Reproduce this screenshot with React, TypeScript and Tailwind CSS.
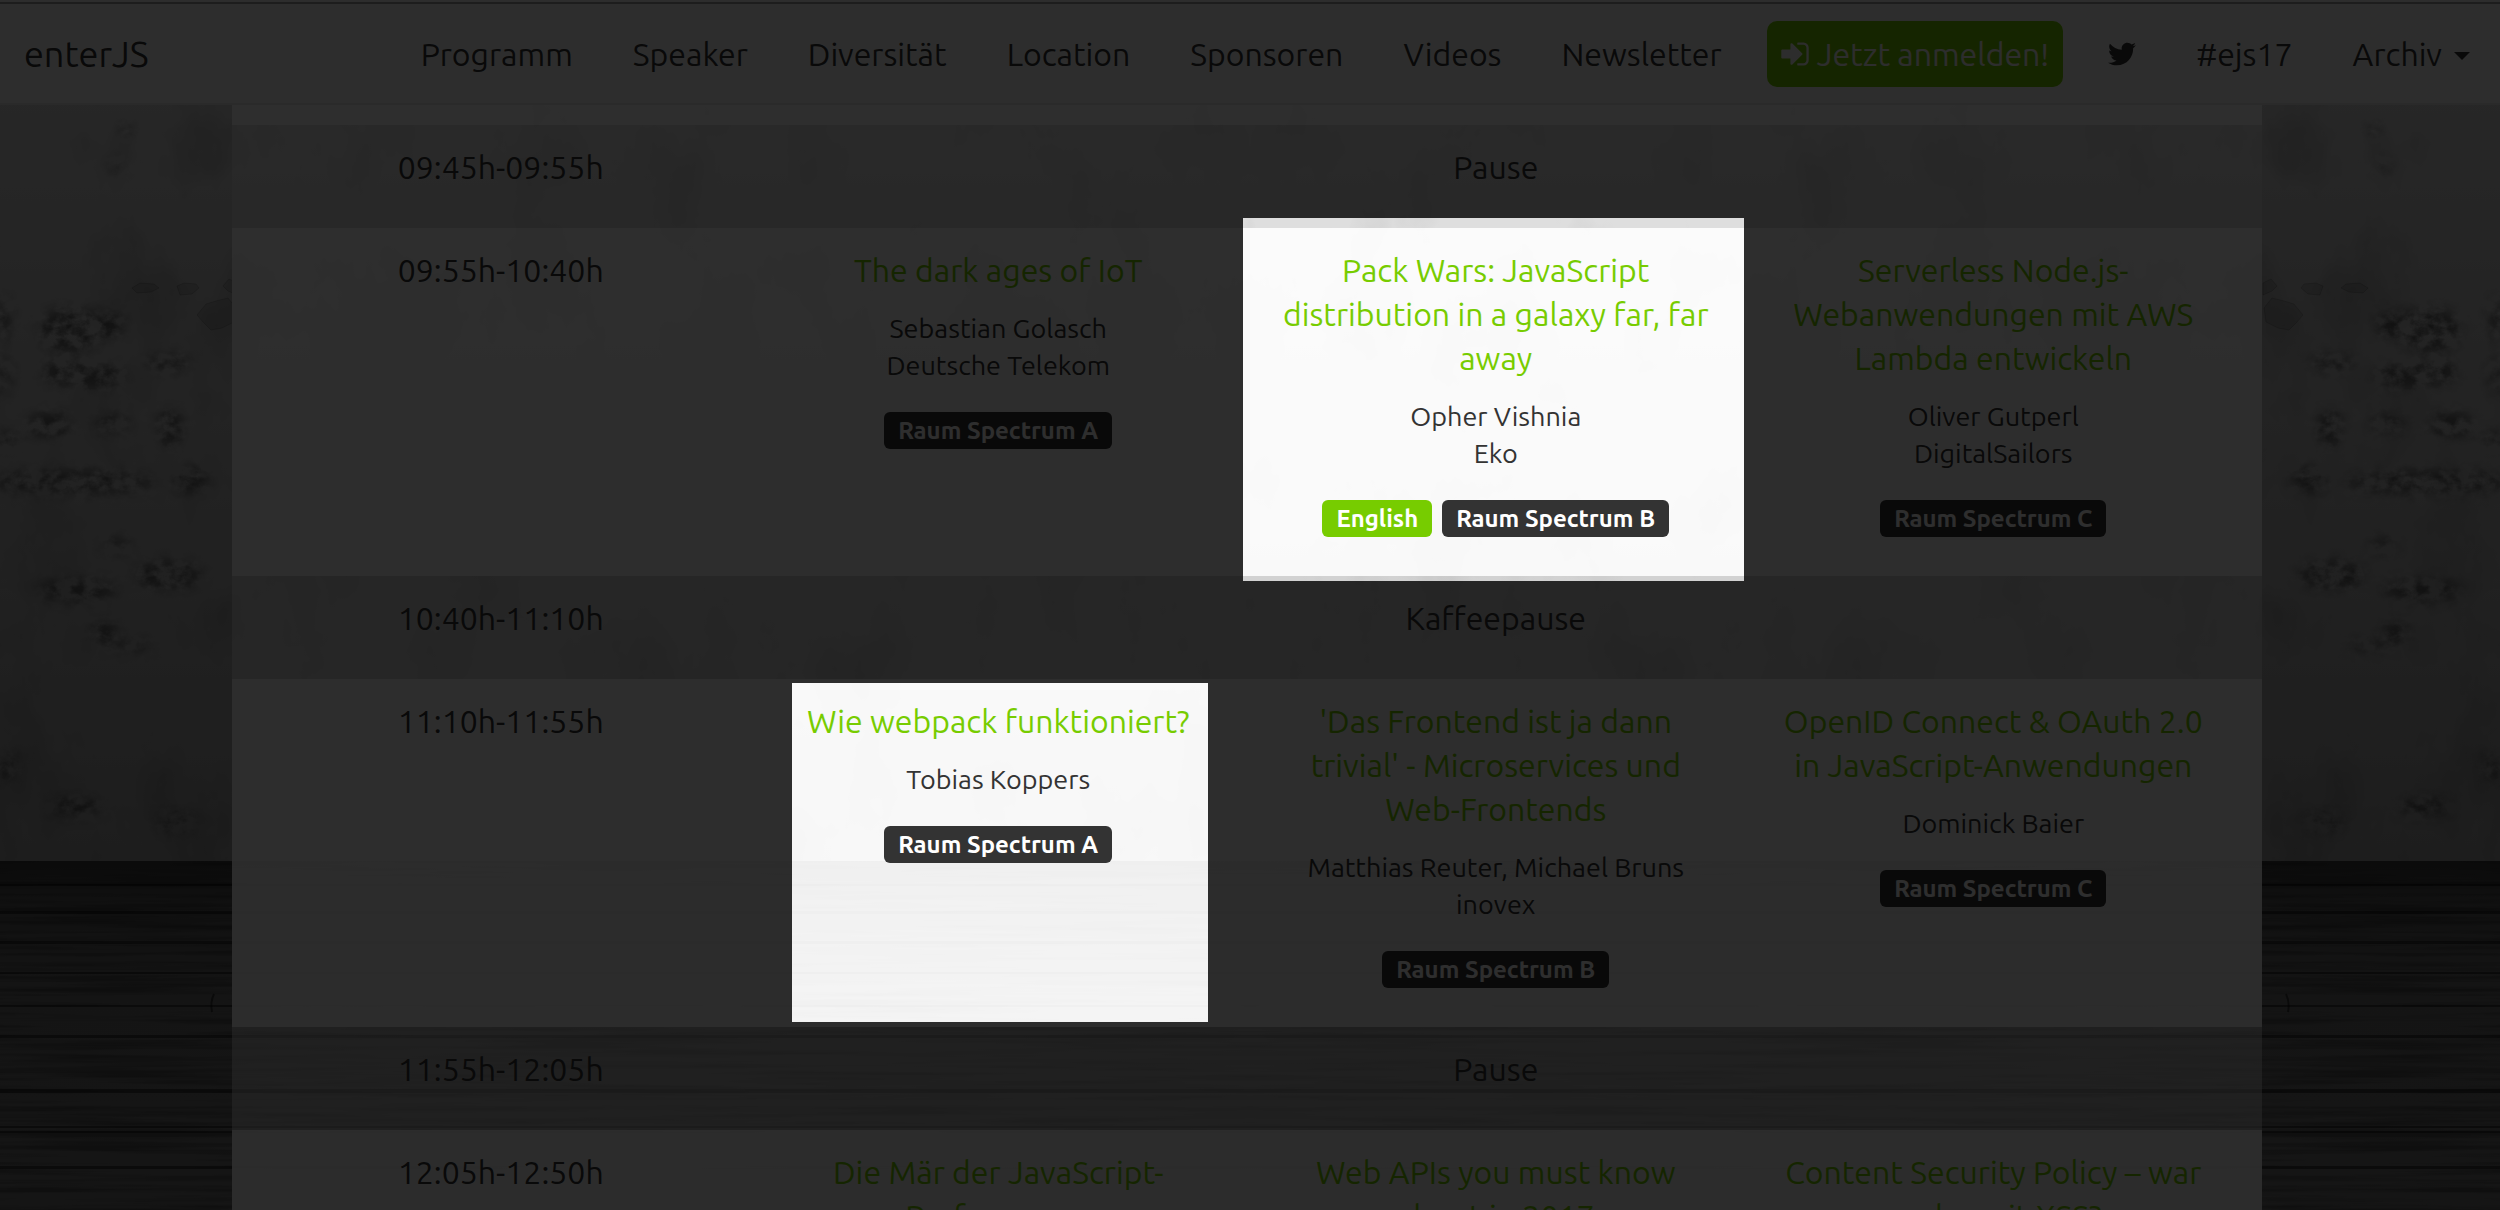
import { FaTwitter } from 'react-icons/fa';

interface ISession {
  title: string[];
  speaker: string[];
  room: string;
  english?: boolean;
}

interface ISlot {
  time: string;
  pause?: string;
  sessions?: ISession[];
}

const navList = ['Programm', 'Speaker', 'Diversität', 'Location', 'Sponsoren', 'Videos', 'Newsletter'];

const slotList: ISlot[] = [
  { time: '09:45h-09:55h', pause: 'Pause' },
  {
    time: '09:55h-10:40h',
    sessions: [
      { title: ['The dark ages of IoT'], speaker: ['Sebastian Golasch', 'Deutsche Telekom'], room: 'Raum Spectrum A' },
      {
        title: ['Pack Wars: JavaScript', 'distribution in a galaxy far, far', 'away'],
        speaker: ['Opher Vishnia', 'Eko'],
        room: 'Raum Spectrum B',
        english: true,
      },
      {
        title: ['Serverless Node.js-', 'Webanwendungen mit AWS', 'Lambda entwickeln'],
        speaker: ['Oliver Gutperl', 'DigitalSailors'],
        room: 'Raum Spectrum C',
      },
    ],
  },
  { time: '10:40h-11:10h', pause: 'Kaffeepause' },
  {
    time: '11:10h-11:55h',
    sessions: [
      { title: ['Wie webpack funktioniert?'], speaker: ['Tobias Koppers'], room: 'Raum Spectrum A' },
      {
        title: ["'Das Frontend ist ja dann", "trivial' - Microservices und", 'Web-Frontends'],
        speaker: ['Matthias Reuter, Michael Bruns', 'inovex'],
        room: 'Raum Spectrum B',
      },
      {
        title: ['OpenID Connect & OAuth 2.0', 'in JavaScript-Anwendungen'],
        speaker: ['Dominick Baier'],
        room: 'Raum Spectrum C',
      },
    ],
  },
  { time: '11:55h-12:05h', pause: 'Pause' },
  {
    time: '12:05h-12:50h',
    sessions: [
      { title: ['Die Mär der JavaScript-', 'Performance'], speaker: [], room: '' },
      { title: ['Web APIs you must know', 'about in 2017'], speaker: [], room: '' },
      { title: ['Content Security Policy – war', 'es das mit XSS?'], speaker: [], room: '' },
    ],
  },
];

// cx, cy, rx, ry
const stains = [
  [70, 330, 24, 14],
  [107, 325, 14, 9],
  [62, 372, 16, 8],
  [94, 376, 26, 8],
  [168, 363, 18, 5],
  [170, 428, 10, 12],
  [50, 425, 18, 8],
  [112, 423, 14, 6],
  [6, 440, 10, 5],
  [70, 482, 66, 7],
  [190, 480, 14, 8],
  [115, 545, 12, 4],
  [168, 575, 26, 9],
  [78, 590, 30, 7],
  [104, 632, 10, 7],
  [130, 645, 20, 3],
  [3, 320, 6, 14],
  [4, 375, 5, 12],
  [75, 807, 22, 6],
  [176, 822, 16, 6],
  [8, 768, 8, 9],
  [126, 130, 4, 5],
  [118, 165, 5, 4],
];

// y, thickness
const planks = [
  [884, 2],
  [911, 3],
  [941, 3],
  [972, 2],
  [1005, 2],
  [1035, 3],
  [1089, 4],
  [1126, 2],
  [1131, 2],
  [1166, 3],
];

function WallHalf({ id }: { id: string }) {
  return (
    <svg className="block h-full w-full" viewBox="0 0 1250 1210" preserveAspectRatio="none" aria-hidden="true">
      <defs>
        <linearGradient id={`${id}-wall`} x1="0" y1="0" x2="0" y2="1">
          <stop offset="0" stopColor="#dcdcdc" />
          <stop offset="0.4" stopColor="#c4c4c4" />
          <stop offset="1" stopColor="#a2a2a2" />
        </linearGradient>
        <linearGradient id={`${id}-wood`} x1="0" y1="0" x2="0" y2="1">
          <stop offset="0" stopColor="#3c3c3c" />
          <stop offset="0.12" stopColor="#5c5c5c" />
          <stop offset="0.4" stopColor="#727272" />
          <stop offset="1" stopColor="#747474" />
        </linearGradient>
        <filter id={`${id}-rough`} filterUnits="userSpaceOnUse" x="0" y="0" width="1250" height="861">
          <feTurbulence type="fractalNoise" baseFrequency="0.07 0.09" numOctaves="5" seed="4" />
          <feColorMatrix values="0 0 0 0 0  0 0 0 0 0  0 0 0 0 0  0 0 0 3 -1.1" result="noise" />
          <feGaussianBlur in="SourceGraphic" stdDeviation="7" result="soft" />
          <feComposite in="soft" in2="noise" operator="in" />
        </filter>
        <filter id={`${id}-plaster`} x="0" y="0" width="100%" height="100%">
          <feTurbulence type="fractalNoise" baseFrequency="0.012 0.008" numOctaves="5" seed="11" />
          <feColorMatrix values="0 0 0 0 0  0 0 0 0 0  0 0 0 0 0  0 0 0 3 -1.5" />
        </filter>
        <filter id={`${id}-grain`} x="0" y="0" width="100%" height="100%">
          <feTurbulence type="fractalNoise" baseFrequency="0.004 0.16" numOctaves="3" seed="9" />
          <feColorMatrix values="0 0 0 0 0  0 0 0 0 0  0 0 0 0 0  0 0 0 3 -1.3" />
        </filter>
      </defs>
      <rect width="1250" height="861" fill={`url(#${id}-wall)`} />
      <rect width="1250" height="861" opacity="0.12" filter={`url(#${id}-plaster)`} />
      <g filter={`url(#${id}-rough)`} fill="#1c1c1c" opacity="0.55">
        {stains.map(([cx, cy, rx, ry]) => (
          <ellipse key={`${cx}-${cy}`} cx={cx} cy={cy} rx={rx * 1.3} ry={ry * 1.6} />
        ))}
      </g>
      <g fill="#000" fillOpacity="0.1" stroke="#000" strokeOpacity="0.15">
        <path d="M197 315L206 304L216 301L228 298L236 308L234 322L222 328L211 330L203 322Z" />
        <path d="M132 288l8-5 14 1 5 4-8 4-14 1z" />
        <path d="M177 286l7-3 12 1 3 4-7 6-12 1z" />
        <path d="M223 286l6-7 8 4v12l-9-4z" />
      </g>
      <rect y="861" width="1250" height="349" fill={`url(#${id}-wood)`} />
      <rect y="861" width="1250" height="349" opacity="0.28" filter={`url(#${id}-grain)`} />
      {planks.map(([y, h]) => (
        <rect key={y} y={y} width="1250" height={h} fill="#000" fillOpacity="0.45" />
      ))}
      <path d="M214 994q-4 8-2 18" fill="none" stroke="#000" strokeOpacity="0.5" strokeWidth="2" />
    </svg>
  );
}

function SignInIcon() {
  return (
    <svg className="h-8 w-7" viewBox="0 0 1536 1792" fill="currentColor" aria-hidden="true">
      <path d="M1184 896q0 26-19 45l-544 544q-19 19-45 19t-45-19-19-45v-288h-448q-26 0-45-19t-19-45v-384q0-26 19-45t45-19h448v-288q0-26 19-45t45-19 45 19l544 544q19 19 19 45zm352-352v704q0 119-84.5 203.5t-203.5 84.5h-320q-13 0-22.5-9.5t-9.5-22.5q0-4-1-20t-.5-26.5 3-23.5 10-19.5 20.5-6.5h320q66 0 113-47t47-113v-704q0-66-47-113t-113-47h-312l-11.5-1-11.5-3-8-5.5-7-9-2-13.5q0-4-1-20t-.5-26.5 3-23.5 10-19.5 20.5-6.5h320q119 0 203.5 84.5t84.5 203.5z" />
    </svg>
  );
}

function Navbar() {
  return (
    <nav className="flex h-[105px] items-center border-b-2 border-[#e7e7e7] bg-[#fafafa] pt-1 shadow-[inset_0_2px_0_#fafafa,inset_0_4px_0_#a0a0a0]">
      <a href="#top" className="pl-6 text-4xl">
        enterJS
      </a>
      <ul className="ml-auto flex items-center">
        {navList.map((name) => (
          <li key={name}>
            <a href={`#${name}`} className="px-[30px]">
              {name}
            </a>
          </li>
        ))}
        <li className="px-[15px]">
          <a
            href="#anmelden"
            className="flex h-[66px] items-center gap-2 rounded-[10px] bg-[#77cc00] px-[14px] text-[#fafafa]">
            <SignInIcon />
            Jetzt anmelden!
          </a>
        </li>
        <li>
          <a href="#twitter" aria-label="Twitter" className="block px-[30px]">
            <FaTwitter className="h-7 w-7" />
          </a>
        </li>
        <li>
          <a href="#ejs17" className="px-[30px]">
            #ejs17
          </a>
        </li>
        <li>
          <button type="button" className="flex items-center gap-3 px-[30px]">
            Archiv
            <span className="mt-1 border-x-8 border-t-8 border-x-transparent border-t-[#333333]" />
          </button>
        </li>
      </ul>
    </nav>
  );
}

function Session({ title, speaker, room, english }: ISession) {
  return (
    <div className="flex flex-col items-center">
      <a href={`#${title[0]}`} className="whitespace-nowrap text-[#77cc00]">
        {title.map((line) => (
          <span key={line} className="block">
            {line}
          </span>
        ))}
      </a>
      {speaker.length > 0 && (
        <div className="mt-[18px] whitespace-nowrap text-[27px] leading-[37px]">
          {speaker.map((line) => (
            <p key={line}>{line}</p>
          ))}
        </div>
      )}
      {room && (
        <div className="mt-7 flex gap-[10px] text-2xl leading-[37px] font-bold text-white">
          {english && <span className="rounded-md bg-[#77cc00] px-[14px] leading-[37px]">English</span>}
          <span className="rounded-md bg-[#333333] px-[14px] leading-[37px]">{room}</span>
        </div>
      )}
    </div>
  );
}

function Slot({ time, pause, sessions }: ISlot) {
  if (pause) {
    return (
      <div className="grid h-[103px] grid-cols-4 bg-[#f0f0f0]/50 px-5 pt-5 text-center">
        <div>{time}</div>
        <div className="col-span-3">{pause}</div>
      </div>
    );
  }

  return (
    <div className="grid grid-cols-4 bg-white/92 px-5 pt-5 pb-[39px] text-center">
      <div>{time}</div>
      {sessions?.map((session) => <Session key={session.title[0]} {...session} />)}
    </div>
  );
}

export default function App() {
  return (
    <div className="relative h-screen overflow-hidden bg-[#727272] font-['Ubuntu','Noto_Sans',sans-serif] text-[32px] leading-[44px] text-[#333333]">
      <div className="absolute inset-0 flex">
        <div className="w-1/2">
          <WallHalf id="left" />
        </div>
        <div className="w-1/2 -scale-x-100">
          <WallHalf id="right" />
        </div>
      </div>
      <div className="relative">
        <Navbar />
        <div className="pr-1.5">
          <main className="mx-auto w-[81.4%]">
            <div className="h-5 bg-white/92" />
            {slotList.map((slot) => (
              <Slot key={slot.time} {...slot} />
            ))}
          </main>
        </div>
      </div>
      {/* dimmer with two cut-outs for the highlighted talks */}
      <div className="pointer-events-none absolute inset-0 bg-black/82 [clip-path:polygon(evenodd,0_0,100%_0,100%_100%,0_100%,0_0,1243px_218px,1744px_218px,1744px_581px,1243px_581px,1243px_218px,0_0,792px_683px,1208px_683px,1208px_1022px,792px_1022px,792px_683px,0_0)]" />
    </div>
  );
}
